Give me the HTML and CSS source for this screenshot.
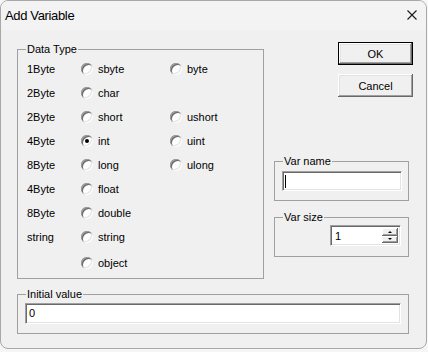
FILE: index.html
```html
<!DOCTYPE html>
<html lang="en">
<head>
  <meta charset="UTF-8">
  <title>Add Variable</title>
  <link rel="stylesheet" href="styles.css">
</head>
<body>
  <div class="dialog">
    <div class="titlebar">
      <span class="title">Add Variable</span>
      <svg class="close" width="10" height="10" viewBox="0 0 10 10">
        <path d="M0.5 0.5L9.5 9.5M9.5 0.5L0.5 9.5" stroke="#1a1a1a" stroke-width="1.1" fill="none"/>
      </svg>
    </div>

    <div class="content">
      <div class="main">
        <fieldset class="group types">
          <legend>Data Type</legend>
          <div class="type-grid">
            <span>1Byte</span>
            <label class="opt"><span class="radio"></span>sbyte</label>
            <label class="opt"><span class="radio"></span>byte</label>

            <span>2Byte</span>
            <label class="opt"><span class="radio"></span>char</label>
            <span></span>

            <span>2Byte</span>
            <label class="opt"><span class="radio"></span>short</label>
            <label class="opt"><span class="radio"></span>ushort</label>

            <span>4Byte</span>
            <label class="opt"><span class="radio checked"></span>int</label>
            <label class="opt"><span class="radio"></span>uint</label>

            <span>8Byte</span>
            <label class="opt"><span class="radio"></span>long</label>
            <label class="opt"><span class="radio"></span>ulong</label>

            <span>4Byte</span>
            <label class="opt"><span class="radio"></span>float</label>
            <span></span>

            <span>8Byte</span>
            <label class="opt"><span class="radio"></span>double</label>
            <span></span>

            <span>string</span>
            <label class="opt"><span class="radio"></span>string</label>
            <span></span>

            <span class="last"></span>
            <label class="opt last"><span class="radio"></span>object</label>
            <span class="last"></span>
          </div>
        </fieldset>

        <div class="side">
          <button class="btn default">OK</button>
          <button class="btn cancel">Cancel</button>

          <fieldset class="group small var-name">
            <legend>Var name</legend>
            <div class="textbox name-box"><span class="caret"></span></div>
          </fieldset>

          <fieldset class="group small var-size">
            <legend>Var size</legend>
            <div class="spin">
              <span class="spin-value">1</span>
              <div class="spin-btns">
                <span class="spin-btn"><i class="arrow up"></i></span>
                <span class="spin-btn"><i class="arrow down"></i></span>
              </div>
            </div>
          </fieldset>
        </div>
      </div>

      <fieldset class="group initial">
        <legend>Initial value</legend>
        <div class="textbox value-box">0</div>
      </fieldset>
    </div>
  </div>
</body>
</html>
```

FILE: styles.css
```css
body {
  margin: 0;
  background-color: #f6f6f6;
  font-family: "Liberation Sans", Arial, sans-serif;
  font-size: 11px;
  color: #000;
}
.dialog {
  width: 427px;
  height: 349px;
  box-sizing: border-box;
  background: #f0f0f0;
  border: 1px solid #a8a8a8;
  border-radius: 8px;
  overflow: hidden;
}
.titlebar {
  height: 29px;
  display: flex;
  align-items: center;
  justify-content: space-between;
  padding: 0 9px 0 4px;
  background: #f3f3f3;
}
.title {
  font-size: 13px;
  letter-spacing: -0.35px;
  color: #000;
  padding-bottom: 1px;
}
.close {
  display: block;
  margin-bottom: 2px;
}
.content {
  padding: 13px 0 0 16px;
}
.main {
  display: flex;
  gap: 10px;
  align-items: flex-start;
}

/* Group boxes */
.group {
  margin: 0;
  border: 1px solid #a0a0a0;
  min-width: 0;
  box-sizing: border-box;
}
.group legend {
  padding: 0 1px;
  margin-left: 1px;
  line-height: 13px;
}
.types {
  width: 247px;
  padding: 1px 0 5px 8px;
}
.types legend {
  margin-left: 0;
}
.type-grid {
  display: grid;
  grid-template-columns: 54px 89px auto;
  grid-auto-rows: 24px;
  align-items: center;
  padding-left: 1px;
}
.type-grid .last {
  margin-top: 3px;
}
.opt {
  display: flex;
  align-items: center;
  gap: 5px;
}
.radio {
  width: 12px;
  height: 12px;
  border-radius: 50%;
  background: #fff;
  box-shadow: inset 1px 1px #a0a0a0, inset -1px -1px #fff, inset 2px 2px #696969, inset -2px -2px #e3e3e3;
  position: relative;
}
.radio.checked::after {
  content: "";
  position: absolute;
  left: 4px;
  top: 4px;
  width: 4px;
  height: 4px;
  border-radius: 50%;
  background: #000;
}

/* Right column */
.side {
  width: 139px;
  display: flex;
  flex-direction: column;
  align-items: flex-end;
  margin-top: -1px;
}
.btn {
  width: 75px;
  height: 23px;
  margin: 0;
  padding: 0;
  font-family: inherit;
  font-size: 11px;
  color: #000;
  background: #f0f0f0;
  border: none;
  box-shadow: inset -1px -1px #696969, inset 1px 1px #fff, inset -2px -2px #a0a0a0, inset 2px 2px #e3e3e3;
}
.btn.default {
  border: 1px solid #000;
}
.btn.cancel {
  margin-top: 9px;
}
.small {
  width: 135px;
  align-self: flex-start;
  padding: 3px 7px 9px 7px;
}
.var-name {
  margin-top: 58px;
}
.var-size {
  margin-top: 10px;
  padding: 1px 7px 10px 7px;
}

/* Edit boxes */
.textbox {
  box-sizing: border-box;
  background: #fff;
  border-style: solid;
  border-width: 1px;
  border-color: #a0a0a0 #fff #fff #a0a0a0;
  box-shadow: inset 1px 1px #696969, inset -1px -1px #e3e3e3;
  padding: 0 0 0 3px;
  line-height: 19px;
}
.name-box {
  width: 120px;
  height: 20px;
  position: relative;
}
.caret {
  position: absolute;
  left: 2px;
  top: 3px;
  width: 1px;
  height: 13px;
  background: #000;
}
.value-box {
  width: 376px;
  height: 21px;
}
.spin {
  width: 71px;
  height: 21px;
  margin-left: auto;
  box-sizing: border-box;
  display: flex;
  justify-content: space-between;
  background: #fff;
  border-style: solid;
  border-width: 1px;
  border-color: #a0a0a0 #fff #fff #a0a0a0;
  box-shadow: inset 1px 1px #696969, inset -1px -1px #e3e3e3;
  padding: 2px 2px 2px 4px;
}
.spin-value {
  line-height: 17px;
}
.spin-btns {
  display: flex;
  flex-direction: column;
  width: 16px;
}
.spin-btn {
  flex: 1;
  display: flex;
  align-items: center;
  justify-content: center;
  background: #f0f0f0;
  box-shadow: inset -1px -1px #696969, inset 1px 1px #fff, inset -2px -2px #a0a0a0;
}
.arrow {
  width: 0;
  height: 0;
  border-left: 2px solid transparent;
  border-right: 2px solid transparent;
}
.arrow.up {
  border-bottom: 2px solid #000;
}
.arrow.down {
  border-top: 2px solid #000;
}

.initial {
  width: 392px;
  margin-top: 9px;
  padding: 2px 7px 9px 7px;
}
```
